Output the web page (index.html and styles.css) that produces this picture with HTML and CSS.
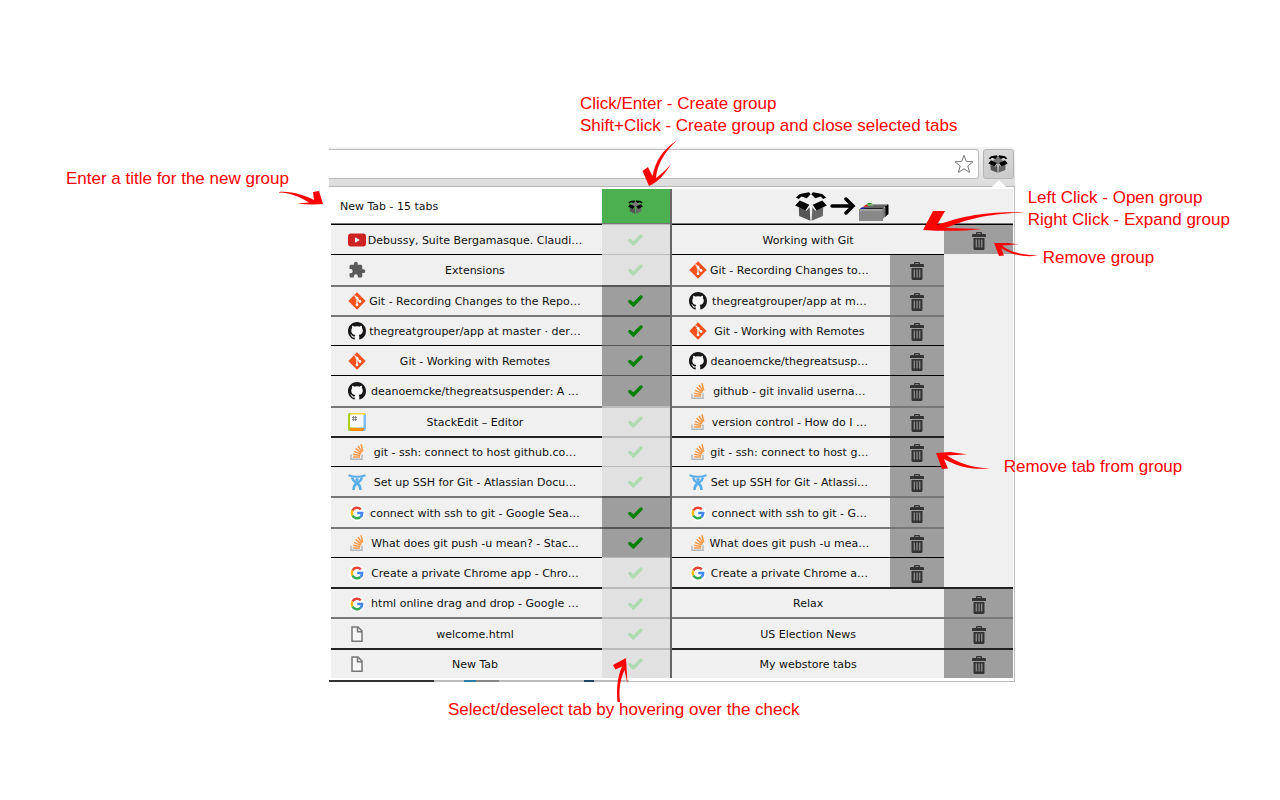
FILE: index.html
```html
<!DOCTYPE html>
<html lang="en">
<head>
<meta charset="utf-8">
<title>Tab groups</title>
<link rel="stylesheet" href="styles.css">
</head>
<body>
<svg class="defs" aria-hidden="true">
  <symbol id="box" viewBox="0 0 96 88">
    <path fill="#555" d="M11 46 34 57 44 46 46 87 12 73Z"/><path fill="#666" d="M85 46 62 57 52 46 50 87 84 73Z"/>
    <path d="M2 17 14 6 42 1 47 7 35 19 19 14 11 21ZM94 17 82 6 54 1 49 7 61 19 77 14 85 21ZM0 41 14 26 43 39 31 56ZM96 41 82 26 53 39 65 56Z"/>
  </symbol>
  <symbol id="boxfull" viewBox="0 0 96 88">
    <path fill="#777" d="M22 28 48 8 74 28 48 46Z"/><use href="#box"/>
  </symbol>
  <symbol id="trash" viewBox="0 0 14 18">
    <path fill="#333" fill-rule="evenodd" d="M4 2V1Q4 0 5 0H9Q10 0 10 1V2H13Q14 2 14 3V5H0V3Q0 2 1 2ZM5.300 1.200V2H8.700V1.200ZM1.500 6H12.500V16.500Q12.500 18 11 18H3Q1.500 18 1.500 16.500ZM3.700 7.500V15.500H4.800V7.500ZM6.500 7.500V15.500H7.600V7.500ZM9.200 7.500V15.500H10.300V7.500Z"/>
  </symbol>
  <symbol id="tick" viewBox="0 0 15 12"><path fill="none" stroke="currentColor" stroke-width="3.400" stroke-linecap="round" d="M1.900 6.500 5.300 9.800 13 2"/></symbol>
  <symbol id="git" viewBox="0 0 18 18">
    <path fill="#f4511e" d="M9 .3 17.700 9 9 17.700.3 9Z"/>
    <path fill="none" stroke="#fff" stroke-width="1.200" d="M6.500 3.500 9 6V13M9 6.500 12 9.500"/>
    <g fill="#fff"><circle cx="9" cy="6.200" r="1.400"/><circle cx="9" cy="12.800" r="1.400"/><circle cx="12" cy="9.500" r="1.400"/></g>
  </symbol>
  <symbol id="github" viewBox="0 0 16 16">
    <circle cx="8" cy="8" r="7" fill="#fafafa"/>
    <path fill="#181616" d="M8 0C3.580 0 0 3.580 0 8c0 3.540 2.290 6.530 5.470 7.590.4.070.55-.17.55-.38 0-.19-.01-.82-.01-1.490-2.010.37-2.530-.49-2.690-.94-.09-.23-.48-.94-.82-1.130-.28-.15-.68-.52-.01-.53.63-.01 1.080.58 1.230.82.72 1.210 1.870.87 2.330.66.07-.52.28-.87.51-1.070-1.780-.2-3.640-.89-3.640-3.950 0-.87.31-1.590.82-2.150-.08-.2-.36-1.020.08-2.120 0 0 .67-.21 2.200.82.64-.18 1.320-.27 2-.27s1.360.09 2 .27c1.530-1.040 2.200-.82 2.200-.82.44 1.100.16 1.920.08 2.120.51.56.82 1.270.82 2.150 0 3.070-1.870 3.750-3.650 3.950.29.25.54.73.54 1.480 0 1.070-.01 1.930-.01 2.200 0 .21.15.46.55.38A8.010 8.010 0 0 0 16 8c0-4.420-3.580-8-8-8z"/>
  </symbol>
  <symbol id="so" viewBox="0 0 18 18">
    <path fill="none" stroke="#b5b8bb" stroke-width="1.500" d="M3 11.500V16.200H14V11.500"/>
    <path fill="none" stroke="#f79a4b" stroke-width="1.500" d="M5 14H12M5.200 11.300 12.200 12.600M6 8.400 12.700 11.100M7.600 5.400 13.300 10.100M10 3 14 9M13 1.300 14.800 8.500"/>
  </symbol>
  <symbol id="google" viewBox="0 0 18 18">
    <circle cx="9" cy="9" r="8" fill="#fff"/>
    <g fill="none" stroke-width="2.500"><path stroke="#ea4335" d="M4.400 6.500A5.200 5.200 0 0 1 12.800 5.400"/><path stroke="#fbbc05" d="M4.400 11.500A5.200 5.200 0 0 1 4.400 6.500"/><path stroke="#34a853" d="M12.400 13A5.200 5.200 0 0 1 4.400 11.500"/><path stroke="#4285f4" d="M9.200 9H14.200Q14.200 11.500 12.400 13"/></g>
  </symbol>
  <symbol id="atl" viewBox="0 0 18 18">
    <g fill="none" stroke="#5aaee8"><path stroke-width="2" d="M.5 2.200Q9 5.500 17.500 2.200"/><path stroke-width="2.600" d="M4 4.500Q5 8 8 9.500Q12.500 12 12.500 17M14 4.500Q13 8 10 9.500Q5.500 12 5.500 17"/></g><circle cx="9" cy="6.600" r="1.700" fill="#5aaee8"/>
  </symbol>
  <symbol id="youtube" viewBox="0 0 18 18"><rect x="0" y="2.500" width="18" height="13" rx="3" fill="#cf2222"/><path fill="#fff" d="M7 6.200 12 9 7 11.800Z"/></symbol>
  <symbol id="puzzle" viewBox="0 0 24 24"><path fill="#5a5a5a" d="M20.500 11H19V7c0-1.100-.9-2-2-2h-4V3.500a2.500 2.500 0 0 0-5 0V5H4c-1.100 0-2 .9-2 2v3.800h1.500a2.700 2.700 0 0 1 0 5.400H2V20c0 1.100.9 2 2 2h3.800v-1.500a2.700 2.700 0 0 1 5.400 0V22H17c1.100 0 2-.9 2-2v-4h1.500a2.500 2.500 0 0 0 0-5z"/></symbol>
  <symbol id="stack" viewBox="0 0 18 18">
    <rect width="18" height="18" rx="2" fill="#7dbdf5"/><path fill="#a9cf1c" d="M2 0H9V18H2Q0 18 0 16V2Q0 0 2 0Z"/><path fill="#ffd83a" d="M3 0H16Q18 0 17 2H2Z"/><path fill="#ff8c0a" d="M1.500 15H16.500L15 18H3Z"/><rect x="2" y="1.500" width="13.500" height="13" rx="1" fill="#f8f8f8"/><path stroke="#888" d="M5.500 3V8M7.500 3V8M4 4.500H9M4 6.500H9"/>
  </symbol>
  <symbol id="page" viewBox="0 0 18 18"><path fill="#f7f7f7" stroke="#777" stroke-width="1.500" d="M4 2H10L14 6V16.300H4ZM9.500 2V6.700H14"/></symbol>
</svg>

<main class="stage">
<div class="figure">
  <div class="toolbar">
    <div class="omnibox">
      <input class="address" type="text" aria-label="Address">
      <svg class="star" viewBox="0 0 20 20"><path fill="#fff" stroke="#777" d="M10 1.300 12.300 7.500 19 7.800 13.800 12 15.600 18.500 10 14.800 4.400 18.500 6.200 12 1 7.800 7.700 7.500Z"/></svg>
    </div>
    <button class="ext" aria-label="Tab groups"><svg class="ext-icon"><use href="#boxfull"/></svg></button>
  </div>
  <section class="popup">
    <div class="left">
      <form class="head new-group">
        <input class="title" type="text" value="New Tab - 15 tabs" aria-label="Group title">
        <button class="create" type="button" aria-label="Create group"><svg class="create-icon"><use href="#boxfull"/></svg></button>
      </form>
      <ul class="rows all">
        <li class="row"><a class="tab" href="#"><svg><use href="#youtube"/></svg><span>Debussy, Suite Bergamasque. Claudi…</span></a><label class="check"><input type="checkbox" aria-label="Select Debussy"><svg><use href="#tick"/></svg></label></li>
        <li class="row"><a class="tab" href="#"><svg><use href="#puzzle"/></svg><span>Extensions</span></a><label class="check"><input type="checkbox" aria-label="Select Extensions"><svg><use href="#tick"/></svg></label></li>
        <li class="row soft"><a class="tab" href="#"><svg><use href="#git"/></svg><span>Git - Recording Changes to the Repo…</span></a><label class="check"><input type="checkbox" checked aria-label="Select Git Recording Changes"><svg><use href="#tick"/></svg></label></li>
        <li class="row soft"><a class="tab" href="#"><svg><use href="#github"/></svg><span>thegreatgrouper/app at master · der…</span></a><label class="check"><input type="checkbox" checked aria-label="Select thegreatgrouper"><svg><use href="#tick"/></svg></label></li>
        <li class="row"><a class="tab" href="#"><svg><use href="#git"/></svg><span>Git - Working with Remotes</span></a><label class="check"><input type="checkbox" checked aria-label="Select Git Working with Remotes"><svg><use href="#tick"/></svg></label></li>
        <li class="row"><a class="tab" href="#"><svg><use href="#github"/></svg><span>deanoemcke/thegreatsuspender: A …</span></a><label class="check"><input type="checkbox" checked aria-label="Select thegreatsuspender"><svg><use href="#tick"/></svg></label></li>
        <li class="row soft"><a class="tab" href="#"><svg><use href="#stack"/></svg><span>StackEdit – Editor</span></a><label class="check"><input type="checkbox" aria-label="Select StackEdit"><svg><use href="#tick"/></svg></label></li>
        <li class="row bold"><a class="tab" href="#"><svg><use href="#so"/></svg><span>git - ssh: connect to host github.co…</span></a><label class="check"><input type="checkbox" aria-label="Select git ssh"><svg><use href="#tick"/></svg></label></li>
        <li class="row"><a class="tab" href="#"><svg><use href="#atl"/></svg><span>Set up SSH for Git - Atlassian Docu…</span></a><label class="check"><input type="checkbox" aria-label="Select Set up SSH"><svg><use href="#tick"/></svg></label></li>
        <li class="row soft"><a class="tab" href="#"><svg><use href="#google"/></svg><span>connect with ssh to git - Google Sea…</span></a><label class="check"><input type="checkbox" checked aria-label="Select connect with ssh"><svg><use href="#tick"/></svg></label></li>
        <li class="row soft"><a class="tab" href="#"><svg><use href="#so"/></svg><span>What does git push -u mean? - Stac…</span></a><label class="check"><input type="checkbox" checked aria-label="Select What does git push"><svg><use href="#tick"/></svg></label></li>
        <li class="row"><a class="tab" href="#"><svg><use href="#google"/></svg><span>Create a private Chrome app - Chro…</span></a><label class="check"><input type="checkbox" aria-label="Select Create a private Chrome app"><svg><use href="#tick"/></svg></label></li>
        <li class="row bold"><a class="tab" href="#"><svg><use href="#google"/></svg><span>html online drag and drop - Google …</span></a><label class="check"><input type="checkbox" aria-label="Select html online"><svg><use href="#tick"/></svg></label></li>
        <li class="row soft"><a class="tab" href="#"><svg><use href="#page"/></svg><span>welcome.html</span></a><label class="check"><input type="checkbox" aria-label="Select welcome.html"><svg><use href="#tick"/></svg></label></li>
        <li class="row bold"><a class="tab" href="#"><svg><use href="#page"/></svg><span>New Tab</span></a><label class="check"><input type="checkbox" aria-label="Select New Tab"><svg><use href="#tick"/></svg></label></li>
      </ul>
    </div>
    <div class="right">
      <div class="head brand">
        <svg class="brand-box"><use href="#box"/></svg>
        <svg class="brand-arrow" viewBox="0 0 26 18"><path fill="none" stroke="#000" stroke-width="3.500" stroke-linecap="round" d="M2 9H23M16 2 23 9 16 16"/></svg>
        <svg class="brand-files" viewBox="0 0 30 19"><path d="M8 2.500H29.500V12L26 15V5H6Z"/><path fill="#138a13" d="M7 3Q10-1 14 2.500V4H7Z"/><path fill="#777" d="M4 5H26.500V14.500L23 17.500H4Z"/><path stroke="#ccc" d="M4 5H26M7 3H28"/><path fill="#d22" d="M4 5 7 2.500 10 4.500Z"/><path fill="#222" d="M1 7 3 5.500H25L23.500 7Z"/><path fill="#22c" d="M1 7 3 5.200 7 6.500Z"/><path fill="#888" d="M0 7H24V19H0Z"/><path stroke="#bbb" d="M1 8H23"/></svg>
      </div>
      <ul class="rows groups">
        <li class="row"><button class="group">Working with Git</button><button class="del" aria-label="Remove group"><svg><use href="#trash"/></svg></button></li>
        <li class="expanded">
          <ul class="rows members">
            <li class="row"><a class="tab" href="#"><svg><use href="#git"/></svg><span>Git - Recording Changes to…</span></a><button class="del" aria-label="Remove tab"><svg><use href="#trash"/></svg></button></li>
            <li class="row soft"><a class="tab" href="#"><svg><use href="#github"/></svg><span>thegreatgrouper/app at m…</span></a><button class="del" aria-label="Remove tab"><svg><use href="#trash"/></svg></button></li>
            <li class="row soft"><a class="tab" href="#"><svg><use href="#git"/></svg><span>Git - Working with Remotes</span></a><button class="del" aria-label="Remove tab"><svg><use href="#trash"/></svg></button></li>
            <li class="row"><a class="tab" href="#"><svg><use href="#github"/></svg><span>deanoemcke/thegreatsusp…</span></a><button class="del" aria-label="Remove tab"><svg><use href="#trash"/></svg></button></li>
            <li class="row"><a class="tab" href="#"><svg><use href="#so"/></svg><span>github - git invalid userna…</span></a><button class="del" aria-label="Remove tab"><svg><use href="#trash"/></svg></button></li>
            <li class="row soft"><a class="tab" href="#"><svg><use href="#so"/></svg><span>version control - How do I …</span></a><button class="del" aria-label="Remove tab"><svg><use href="#trash"/></svg></button></li>
            <li class="row bold"><a class="tab" href="#"><svg><use href="#so"/></svg><span>git - ssh: connect to host g…</span></a><button class="del" aria-label="Remove tab"><svg><use href="#trash"/></svg></button></li>
            <li class="row"><a class="tab" href="#"><svg><use href="#atl"/></svg><span>Set up SSH for Git - Atlassi…</span></a><button class="del" aria-label="Remove tab"><svg><use href="#trash"/></svg></button></li>
            <li class="row soft"><a class="tab" href="#"><svg><use href="#google"/></svg><span>connect with ssh to git - G…</span></a><button class="del" aria-label="Remove tab"><svg><use href="#trash"/></svg></button></li>
            <li class="row soft"><a class="tab" href="#"><svg><use href="#so"/></svg><span>What does git push -u mea…</span></a><button class="del" aria-label="Remove tab"><svg><use href="#trash"/></svg></button></li>
            <li class="row"><a class="tab" href="#"><svg><use href="#google"/></svg><span>Create a private Chrome a…</span></a><button class="del" aria-label="Remove tab"><svg><use href="#trash"/></svg></button></li>
          </ul>
        </li>
        <li class="row bold"><button class="group">Relax</button><button class="del" aria-label="Remove group"><svg><use href="#trash"/></svg></button></li>
        <li class="row soft"><button class="group">US Election News</button><button class="del" aria-label="Remove group"><svg><use href="#trash"/></svg></button></li>
        <li class="row bold"><button class="group">My webstore tabs</button><button class="del" aria-label="Remove group"><svg><use href="#trash"/></svg></button></li>
      </ul>
    </div>
  </section>
  <div class="desktop"></div>

  <p class="note note-title">Enter a title for the new group</p>
  <p class="note note-create">Click/Enter - Create group<br>Shift+Click - Create group and close selected tabs</p>
  <p class="note note-open">Left Click - Open group<br>Right Click - Expand group</p>
  <p class="note note-remove">Remove group</p>
  <p class="note note-tab">Remove tab from group</p>
  <p class="note note-select">Select/deselect tab by hovering over the check</p>

  <svg class="arrow arrow-title" viewBox="279 190 46 16"><path d="M279 192C292 191 306 196 314 200L313 192 319 191 323 204Q310 205 297 203.500L309 202.500C300 197 292 193 279 192.500Z"/></svg>
  <svg class="arrow arrow-create" viewBox="642 139 36 48"><path d="M677.500 140C662 150 655 162 652.500 176L648 167 642.500 171 649 186C656 183 664 176 671 164 665 171 660 175 656 178 657 166 663 153 677.500 140Z"/></svg>
  <svg class="arrow arrow-open" viewBox="922 209 104 24"><path d="M1025 212.500C985 211 960 217 937 225L945 211H933L923 230C945 231.500 965 231 982 229L946 228C970 218 990 214 1025 212.500Z"/></svg>
  <svg class="arrow arrow-remove" viewBox="994 242 46 16"><path d="M1038 255.500C1022 255 1010 252 1002 245.500L1019 244.300 1008 243 994 243 999 256 1004 255.500 1001 248C1011 255 1025 257.500 1038 255.500Z"/></svg>
  <svg class="arrow arrow-tab" viewBox="936 451 56 20"><path d="M990 468.500C972 467.500 960 464 947 455.500L967 454.300 950 452 936 453 942 469 948 468.500 944 459C958 467 972 470 990 468.500Z"/></svg>
  <svg class="arrow arrow-select" viewBox="612 657 18 46"><path d="M626 658 613 665 615.500 669.500 622 666.500C617 678 616.500 690 617.500 702H620C618.500 690 620 680 624.500 670L627.500 684Z"/></svg>
</div>
</main>
</body>
</html>
```
FILE: styles.css
```css
* { box-sizing: border-box; }
body { margin: 0; background: #fff; color: #111; font-family: "DejaVu Sans", Verdana, sans-serif; font-size: 11px; }
button, input { font: inherit; color: inherit; border: 0; margin: 0; padding: 0; border-radius: 0; }
a { color: inherit; text-decoration: none; }
ul { list-style: none; margin: 0; padding: 0; }
svg { display: block; }
.defs { position: absolute; width: 0; height: 0; }

.stage { min-height: 100vh; padding: 147px 0 0 25.7%; overflow: hidden; }
.figure { position: relative; width: 72.1%; min-width: 560px; }

.toolbar { display: flex; gap: 4px; padding: 2px 1px 7px 0; background: linear-gradient(#f4f4f4, #dcdcdc); border-bottom: 1px solid #b8b8b8; }
.omnibox { flex: 1; display: flex; align-items: center; padding-right: 4px; background: #fff; border: 1px solid #bbb; border-left: 0; border-radius: 0 3px 3px 0; }
.address { flex: 1; min-width: 0; height: 28px; background: transparent; outline: 0; }
.star { width: 20px; height: 20px; }
.ext { display: grid; place-items: center; width: 31px; height: 30px; background: linear-gradient(#d8d8d8, #cbcbcb); border: 1px solid #b3b3b3; border-radius: 3px; }
.ext-icon { width: 20px; height: 18px; }

.popup { position: relative; display: grid; grid-template-columns: 1fr 1fr; padding: 2px 1px 3px 2px; background: #fff; border-right: 1px solid #bbb; border-bottom: 1px solid #bbb; }
.popup::before { content: ""; position: absolute; right: 8px; top: -7px; border: 7px solid transparent; border-top: 0; border-bottom-color: #fff; }
.left { border-right: 2px solid #666; }
.head { height: 35px; border-bottom: 1px solid #777; }
.new-group { display: grid; grid-template-columns: 4fr 1fr; }
.title { min-width: 0; padding-left: 9px; background: #fff; outline: 0; }
.create { display: grid; place-items: center; padding-top: 2px; background: #4caf50; }
.create-icon { width: 15px; height: 14px; }
.brand { display: flex; align-items: center; justify-content: center; gap: 3px; background: #f0f0f0; }
.brand-box { width: 32px; height: 29px; }
.brand-arrow { width: 26px; height: 18px; }
.brand-files { width: 30px; height: 19px; align-self: flex-end; margin-bottom: 2px; }

.rows { display: grid; }
.all, .groups { grid-template-rows: repeat(15, 1fr); min-height: 454px; }
.right { background: #f0f0f0; }
.expanded { grid-row: span 11; display: grid; grid-template-columns: 4fr 1fr; }
.members { grid-template-rows: repeat(11, 1fr); }
.row { display: grid; grid-template-columns: 4fr 1fr; min-height: 0; border-top: 1px solid #000; background: #f0f0f0; }
.soft { border-top: 2px solid #777; }
.bold { border-top: 2px solid #222; }
.tab { display: flex; align-items: center; min-width: 0; padding: 1px 18px 0 17px; }
.tab svg { width: 18px; height: 18px; flex: none; }
.tab span { flex: 1; min-width: 0; text-align: center; white-space: nowrap; }
.group { padding-top: 1px; background: #f0f0f0; text-align: center; }
.del { display: grid; place-items: center; padding-top: 3px; background: #9e9e9e; }
.del svg { width: 14px; height: 18px; }
.check { position: relative; display: grid; place-items: center; margin-top: -1px; padding-top: 1px; color: #b0dab2; border-top: 1px solid #bbb; background: #e1e1e1; }
.soft .check, .bold .check { margin-top: -2px; border-top: 2px solid #bbb; }
.check input { appearance: none; position: absolute; inset: 0; }
.check svg { position: relative; width: 15px; height: 12px; pointer-events: none; }
.check:has(:checked) { background: #9e9e9e; color: #008000; border-top-color: #555; }
.desktop { height: 2px; margin-top: -2px; width: 300px; position: relative; background: linear-gradient(90deg, #333 0 105px, #bbb 105px 135px, #2a7da8 135px 147px, #888 147px 170px, #bbb 170px 255px, #246 255px 265px, #bbb 265px); }

.note { position: absolute; margin: 0; font-family: "Liberation Sans", Arial, sans-serif; font-size: 17px; line-height: 22px; color: #f00; white-space: nowrap; }
.note-title { right: calc(100% + 40px); top: 21px; }
.note-create { left: 251px; top: -54px; }
.note-open { left: calc(100% + 13px); top: 40px; }
.note-remove { left: calc(100% + 28px); top: 100px; }
.note-tab { left: calc(100% - 11px); top: 309px; }
.note-select { left: 119px; top: 552px; }
.arrow { position: absolute; fill: #f00; }
.arrow-title { left: -50px; top: 43px; width: 46px; }
.arrow-create { left: 313px; top: -8px; width: 36px; }
.arrow-open { right: -11px; top: 62px; width: 104px; }
.arrow-remove { right: -25px; top: 95px; width: 46px; }
.arrow-tab { right: 23px; top: 304px; width: 56px; }
.arrow-select { left: 283px; top: 510px; width: 18px; }
```
